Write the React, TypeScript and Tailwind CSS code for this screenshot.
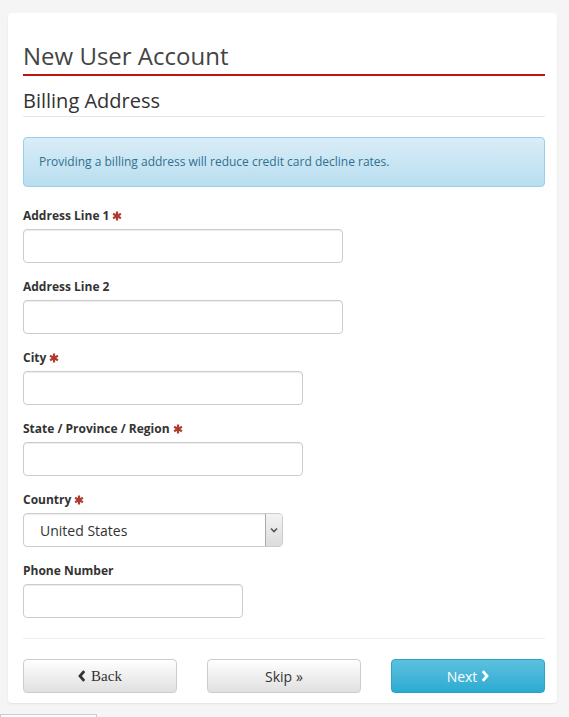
import React from "react";

const Star = () => (
  <svg width="10" height="10" viewBox="0 0 10 10" className="inline-block ml-[3px] -mt-[2px]">
    <g stroke="#b03a2e" strokeWidth="2.2" strokeLinecap="butt">
      <line x1="5" y1="0.5" x2="5" y2="9.5" />
      <line x1="1.1" y1="2.75" x2="8.9" y2="7.25" />
      <line x1="1.1" y1="7.25" x2="8.9" y2="2.75" />
    </g>
  </svg>
);

const Field = ({ label, req, width }: { label: string; req?: boolean; width: string }) => (
  <div className="mb-[15px]">
    <div className="text-[12px] leading-[17px] font-bold text-[#333] mb-[5px]">
      {label}
      {req && <Star />}
    </div>
    <div
      className={`${width} h-[34px] rounded-[4px] border border-[#ccc] bg-white shadow-[inset_0_1px_1px_rgba(0,0,0,0.075)]`}
    />
  </div>
);

export default function App() {
  return (
    <div className="min-h-[717px] bg-[#f5f5f5] pt-[13px] overflow-hidden" style={{ fontFamily: '"Open Sans", sans-serif' }}>
      <div className="mx-[8px] w-[549px] bg-white rounded-[4px] shadow-[0_1px_2px_rgba(0,0,0,0.08)] pl-[15px] pr-[12px] pt-[30px] pb-[10px]">
        <h1 className="text-[24px] leading-[26px] text-[#444] pb-[5px] border-b-2 border-[#c0150f]">
          New User Account
        </h1>
        <h2 className="mt-[14px] text-[20px] leading-[22px] text-[#333] pb-[4px] border-b border-[#e5e5e5]">
          Billing Address
        </h2>
        <div className="mt-[20px] rounded-[4px] border border-[#9acfea] bg-gradient-to-b from-[#d9edf7] to-[#b9def0] px-[15px] py-[15px] text-[12px] leading-[18px] text-[#31708f]">
          Providing a billing address will reduce credit card decline rates.
        </div>
        <div className="mt-[20px]">
          <Field label="Address Line 1" req width="w-[320px]" />
          <Field label="Address Line 2" width="w-[320px]" />
          <Field label="City" req width="w-[280px]" />
          <Field label="State / Province / Region" req width="w-[280px]" />
          <div className="mb-[15px]">
            <div className="text-[12px] leading-[17px] font-bold text-[#333] mb-[5px]">
              Country
              <Star />
            </div>
            <div className="w-[260px] h-[34px] rounded-[4px] border border-[#ccc] bg-white flex items-stretch overflow-hidden shadow-[inset_0_1px_1px_rgba(0,0,0,0.075)]">
              <div className="flex-1 flex items-center pl-[16px] text-[14px] text-[#333]">United States</div>
              <div className="w-[17px] border-l border-[#aaa] bg-gradient-to-b from-[#f3f3f3] to-[#dcdcdc] flex items-center justify-center">
                <svg width="8" height="6" viewBox="0 0 8 6">
                  <polyline points="1,1.5 4,4.5 7,1.5" fill="none" stroke="#555" strokeWidth="1.6" />
                </svg>
              </div>
            </div>
          </div>
          <Field label="Phone Number" width="w-[220px]" />
        </div>
        <div className="border-t border-[#eee] mt-[20px] pt-[20px] grid grid-cols-3 gap-[30px]">
          <button className="h-[34px] rounded-[4px] border border-[#ccc] bg-gradient-to-b from-white to-[#e0e0e0] flex items-center justify-center text-[#333]">
            <svg width="8" height="12" viewBox="0 0 8 12" className="mr-[5px]">
              <polyline points="6.2,1.2 2,6 6.2,10.8" fill="none" stroke="#333" strokeWidth="2.8" />
            </svg>
            <span className="text-[15px]" style={{ fontFamily: '"Liberation Serif", serif' }}>Back</span>
          </button>
          <button className="h-[34px] rounded-[4px] border border-[#ccc] bg-gradient-to-b from-white to-[#e0e0e0] flex items-center justify-center text-[14px] text-[#333]">
            Skip <span className="ml-[4px]">»</span>
          </button>
          <button className="h-[34px] rounded-[4px] border border-[#28a4c9] bg-gradient-to-b from-[#5bc0de] to-[#2aabd2] flex items-center justify-center text-[14px] text-white">
            Next
            <svg width="8" height="12" viewBox="0 0 8 12" className="ml-[4px]">
              <polyline points="1.8,1.2 6,6 1.8,10.8" fill="none" stroke="#fff" strokeWidth="2.8" />
            </svg>
          </button>
        </div>
      </div>
      <div className="mt-[11px] w-[97px] h-[20px] border border-[#ccc] bg-white" />
    </div>
  );
}
